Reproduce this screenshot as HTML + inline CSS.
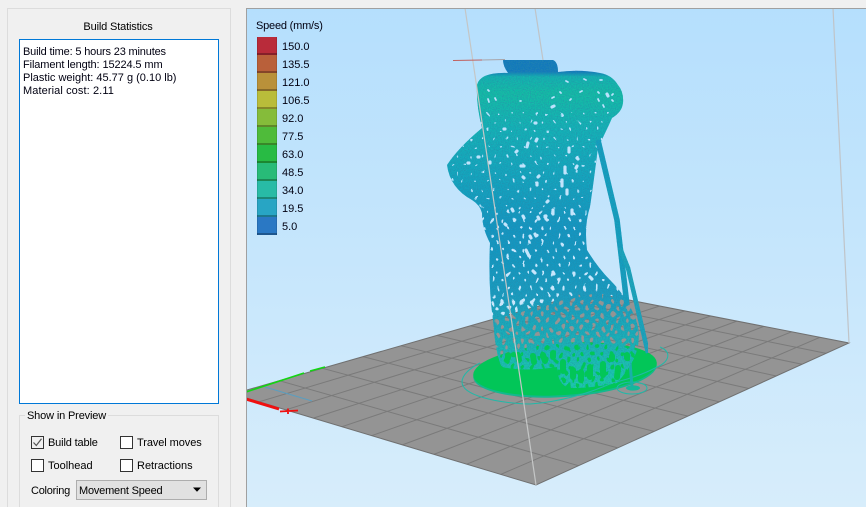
<!DOCTYPE html>
<html>
<head>
<meta charset="utf-8">
<style>
html,body{margin:0;padding:0;background:#f0f0f0;width:866px;height:507px;overflow:hidden;}
body{font-family:"Liberation Sans",Arial,sans-serif;font-size:11px;color:#000;}
#w{position:relative;width:866px;height:507px;overflow:hidden;}
.a{position:absolute;white-space:nowrap;line-height:13px;}
.panel{left:7px;top:8px;width:222px;height:498px;border:1px solid #dcdcdc;border-bottom:0;background:#f0f0f0;}
.list{left:19px;top:39px;width:195px;height:357px;border:1px solid #0078d7;background:#fff;padding:6px 0 0 3px;line-height:13px;color:#001;}
.group{left:19px;top:415px;width:198px;height:91px;border:1px solid #dcdcdc;border-bottom:0;}
.cb{width:11px;height:11px;border:1px solid #333;background:#fff;}
.combo{left:76px;top:480px;width:129px;height:18px;border:1px solid #adadad;background:#e1e1e1;}
.sw{position:absolute;left:257px;width:20px;height:18px;box-shadow:inset 0 -2px 0 rgba(0,0,0,.28),inset 1px 0 0 rgba(0,0,0,.1),inset -1px 0 0 rgba(0,0,0,.1);}
.lb{position:absolute;left:282px;line-height:13px;color:#001;}
.t{letter-spacing:-.15px;}
</style>
</head>
<body>
<div id="w">
<div class="a panel"></div>
<div class="a t" style="left:7px;width:222px;top:21px;text-align:center;">Build Statistics</div>
<div class="a list"><span style="letter-spacing:-.17px">Build time: 5 hours 23 minutes</span><br><span style="letter-spacing:-.11px">Filament length: 15224.5 mm</span><br>Plastic weight: 45.77 g (0.10 lb)<br><span style="letter-spacing:.1px">Material cost: 2.11</span></div>
<div class="a group"></div>
<div class="a t" style="left:25px;top:410px;padding:0 2px;background:#f0f0f0;">Show in Preview</div>

<div class="a cb" style="left:31px;top:436px;background:#f0f0f0;"></div>
<svg class="a" style="left:31px;top:436px;" width="13" height="13"><path d="M2.5 6.5L5.3 9.5L10.5 2.8" fill="none" stroke="#555" stroke-width="1.2"/></svg>
<div class="a t" style="left:48px;top:437px;">Build table</div>
<div class="a cb" style="left:120px;top:436px;"></div>
<div class="a" style="left:137px;top:437px;letter-spacing:-.08px;">Travel moves</div>
<div class="a cb" style="left:31px;top:459px;"></div>
<div class="a" style="left:48px;top:460px;">Toolhead</div>
<div class="a cb" style="left:120px;top:459px;"></div>
<div class="a" style="left:137px;top:460px;">Retractions</div>
<div class="a t" style="left:31px;top:485px;letter-spacing:-.25px;">Coloring</div>
<div class="a combo"></div>
<div class="a" style="left:79px;top:485px;letter-spacing:-.2px;">Movement Speed</div>
<svg class="a" style="left:192px;top:487px;" width="10" height="6"><path d="M1 0.5H9L5 4.8Z" fill="#000"/></svg>

<svg class="a" style="left:0;top:0;display:block;" width="866" height="507" viewBox="0 0 866 507">
<defs>
<clipPath id="vp"><rect x="246" y="8" width="620" height="499"/></clipPath>
<linearGradient id="bg" x1="0" y1="8" x2="0" y2="507" gradientUnits="userSpaceOnUse">
<stop offset="0" stop-color="#b5dffd"/><stop offset="1" stop-color="#d7edfb"/>
</linearGradient>
<linearGradient id="body" x1="0" y1="60" x2="0" y2="395" gradientUnits="userSpaceOnUse">
<stop offset="0" stop-color="#1478bc"/>
<stop offset=".035" stop-color="#1478bc"/>
<stop offset=".05" stop-color="#14b4b0"/>
<stop offset=".1" stop-color="#16bea4"/>
<stop offset=".2" stop-color="#14b4b6"/>
<stop offset=".33" stop-color="#16a8be"/>
<stop offset=".5" stop-color="#1896c2"/>
<stop offset=".7" stop-color="#1a9cc0"/>
<stop offset=".83" stop-color="#1ab2b8"/>
<stop offset=".93" stop-color="#1cc8ae"/>
<stop offset="1" stop-color="#20d0a6"/>
</linearGradient>
<pattern id="p1" width="12" height="17" patternUnits="userSpaceOnUse">
<ellipse cx="2.5" cy="3" rx=".8" ry="1.2" fill="#000"/>
<ellipse cx="8" cy="11" rx="1" ry="1" fill="#000"/>
</pattern>
<pattern id="p2" width="11" height="15" patternUnits="userSpaceOnUse">
<ellipse cx="2.5" cy="3" rx="1.1" ry="1.9" fill="#000"/>
<ellipse cx="8" cy="10" rx="1.1" ry="1.7" fill="#000"/>
</pattern>
<pattern id="p3" width="10" height="13" patternUnits="userSpaceOnUse">
<ellipse cx="2.5" cy="3" rx="1.8" ry="2.8" fill="#000"/>
<ellipse cx="7.5" cy="9" rx="1.8" ry="2.5" fill="#000"/>
</pattern>
<filter id="wob" x="0" y="0" width="100%" height="100%">
<feTurbulence type="fractalNoise" baseFrequency="0.09" numOctaves="2" seed="7" result="n"/>
<feDisplacementMap in="SourceGraphic" in2="n" scale="9" xChannelSelector="R" yChannelSelector="G"/>
</filter>
<filter id="speck" x="0" y="0" width="100%" height="100%">
<feTurbulence type="fractalNoise" baseFrequency="0.85" numOctaves="2" seed="3" result="n"/>
<feColorMatrix in="n" type="matrix" values="0 0 0 0 0.02  0 0 0 0 0.25  0 0 0 0 0.4  1.6 0 0 0 -0.6" result="d"/>
<feComposite in="d" in2="SourceAlpha" operator="in" result="c"/>
<feMerge><feMergeNode in="SourceGraphic"/><feMergeNode in="c"/></feMerge>
</filter>
<mask id="holes" maskUnits="userSpaceOnUse" x="430" y="40" width="240" height="370">
<rect x="430" y="40" width="240" height="370" fill="#fff"/>
<g filter="url(#wob)">
<rect x="430" y="112" width="240" height="98" fill="url(#p1)"/>
<rect x="430" y="210" width="240" height="88" fill="url(#p2)"/>
<rect x="430" y="298" width="240" height="92" fill="url(#p3)"/>
</g>
<g fill="none" stroke="#000" stroke-linecap="round">
<path stroke-width="3.2" d="M552 107l2-1M535 123l1 0M504 129l1 0M537 139l-1 2M528 143l-1 4M478 157l1 0M516 152l1-1M521 166l3 0M538 177l1-1M523 177l1 1M576 168l1-2M569 148l0 4M577 158l1 1M490 162l0 1M468 163l1 0M565 167l0 6M562 180l0 6M567 190l0 4M572 210l0 4M553 210l0 4M545 217l1-1M523 216l1 2M512 209l1 2M607 94l1 2M547 202l1-1M537 183l0 2M538 217l1 2M545 216l1 3M505 224l1 1M526 250l3 6M533 271l2 2M553 272l1 2M590 277l2 2M552 288l1 1M530 236l1 2M535 234l1 2"/>
<path stroke-width="1.8" d="M488 99l1 3M495 98l1 2M488 90l1 1M566 81l2 1M584 79l2 1M600 80l2 0M560 92l1 1M580 92l2-1M598 99l1 2M612 100l1 1M603 105l1 2M613 94l-1 1M598 92l1 1M570 100l1-1M552 98l2-1M520 101l1 0"/>
<path stroke-width="6" d="M518 355l1 5M533 356l1 6M543 355l2 6M508 355l0 3M553 353l0 4M563 362l0 9M573 370l0 7M581 372l0 8M590 367l0 10M603 364l0 11M618 368l-1 9M612 356l0 3M627 355l0 3"/>
</g>
</mask>
</defs>

<rect x="246" y="8" width="620" height="499" fill="url(#bg)"/>

<g clip-path="url(#vp)">
<!-- build plate -->
<path d="M233 394L536 485L849 343L588 292Z" fill="#949494"/>
<g stroke="#7a7a7a" stroke-width="1" fill="none">
<path d="M259 401.8L611.4 296.6M285.8 409.8L635.2 301.2M313.4 418.1L659.7 306M342 426.7L684.8 310.9M371.6 435.7L710.5 316M402.3 444.9L736.8 321.1M433.9 454.4L763.8 326.4M466.7 464.2L791.5 331.8M500.7 474.4L819.9 337.3"/>
<path d="M279.3 380.7L578.5 465.7M322.5 368.3L617.7 447.9M363 356.6L654 431.4M401 345.7L687.8 416.1M436.9 335.4L719.3 401.8M470.6 325.7L748.7 388.5M502.4 316.6L776.2 376M532.5 308L802 364.3M561 299.8L826.2 353.4"/>
</g>
<path d="M233 394L536 485L849 343L588 292Z" fill="none" stroke="#707070" stroke-width="1"/>

<!-- axes -->
<path d="M246 392L304 373" stroke="#12d612" stroke-width="1.6" fill="none"/>
<path d="M310 371L325 367" stroke="#12d612" stroke-width="1.6" fill="none"/>
<path d="M265 387L312 401" stroke="#5a9ec0" stroke-width="1" fill="none"/>
<path d="M246 399L279 409" stroke="#f01010" stroke-width="3" fill="none"/>
<path d="M280 411.5L298 410.5M288 408.5V414" stroke="#f01010" stroke-width="1.8" fill="none"/>

<!-- raft & skirt -->
<ellipse cx="565" cy="371" rx="92" ry="26" transform="rotate(-4 565 371)" fill="#14b88e"/>
<ellipse cx="565" cy="369" rx="92" ry="26" transform="rotate(-4 565 369)" fill="#02c658"/>
<path d="M660 347C672 352 670 362 655 368C640 376 625 380 612 383C590 393 560 402 530 404C495 403 462 395 462 382C462 375 470 368 480 363" fill="none" stroke="#22b8a8" stroke-width="1"/>
<ellipse cx="632" cy="388" rx="15" ry="6" fill="none" stroke="#22b8a8" stroke-width="1"/>
<ellipse cx="633" cy="388" rx="7" ry="2.6" fill="#14b89a"/>
<path d="M630 362L632 387" stroke="#18b0a8" stroke-width="3" fill="none"/>

<!-- statue -->
<g filter="url(#speck)">
<g mask="url(#holes)">
<path fill="url(#body)" d="M503 60L553 60Q558 62 558 72Q580 69 600 73Q612 75 618 85Q624 92 623 103Q622 112 612 118Q606 132 598 147Q594 180 590 207Q584 225 587 250Q598 268 610 280Q628 298 636 320Q641 335 637 350Q633 365 617 383Q595 388 570 388Q558 386 557 367Q525 372 502 367Q496 358 493 320Q488 285 490 243Q482 228 482 213Q480 205 472 200Q450 188 447 165Q458 148 482 128Q476 105 477 85Q480 72 508 73Q503 66 503 60Z"/>
</g>
<path d="M598 140L617 220L627 305" fill="none" stroke="#18a0c0" stroke-width="5.5"/>
<path d="M620 248L628 268L648 353" fill="none" stroke="#1aa6bc" stroke-width="4.5"/>
</g>

<!-- frame -->
<g fill="none" stroke="#c0c4c8" stroke-width="1.2">
<path d="M465 8L536 485" stroke="#c4c6c6"/>
<path d="M535 8L543 60"/>
<path d="M833 8L849 343"/>
</g>
<path d="M453 60.5L482 60" stroke="#c0605e" stroke-width="1" fill="none"/>
<path d="M482 60L505 59.5" stroke="#a8a4a8" stroke-width="1" fill="none"/>
</g>

<rect x="246" y="8" width="620" height="1" fill="#a0a0a0"/>
<rect x="246" y="8" width="1" height="499" fill="#a0a0a0"/>
</svg>

<div class="a" style="left:256px;top:20px;color:#001;letter-spacing:-.2px;">Speed (mm/s)</div>
<div class="sw" style="top:37px;background:#b92b3a;"></div><div class="lb" style="top:41px;">150.0</div>
<div class="sw" style="top:55px;background:#b9603a;"></div><div class="lb" style="top:59px;">135.5</div>
<div class="sw" style="top:73px;background:#b9913a;"></div><div class="lb" style="top:77px;">121.0</div>
<div class="sw" style="top:91px;background:#b9bc3a;"></div><div class="lb" style="top:95px;">106.5</div>
<div class="sw" style="top:109px;background:#85bc3a;"></div><div class="lb" style="top:113px;">92.0</div>
<div class="sw" style="top:127px;background:#4fbb3a;"></div><div class="lb" style="top:131px;">77.5</div>
<div class="sw" style="top:145px;background:#28bb44;"></div><div class="lb" style="top:149px;">63.0</div>
<div class="sw" style="top:163px;background:#28bb78;"></div><div class="lb" style="top:167px;">48.5</div>
<div class="sw" style="top:181px;background:#28bba6;"></div><div class="lb" style="top:185px;">34.0</div>
<div class="sw" style="top:199px;background:#28a5c4;"></div><div class="lb" style="top:203px;">19.5</div>
<div class="sw" style="top:217px;background:#2a78c4;"></div><div class="lb" style="top:221px;">5.0</div>
</div>
</body>
</html>
